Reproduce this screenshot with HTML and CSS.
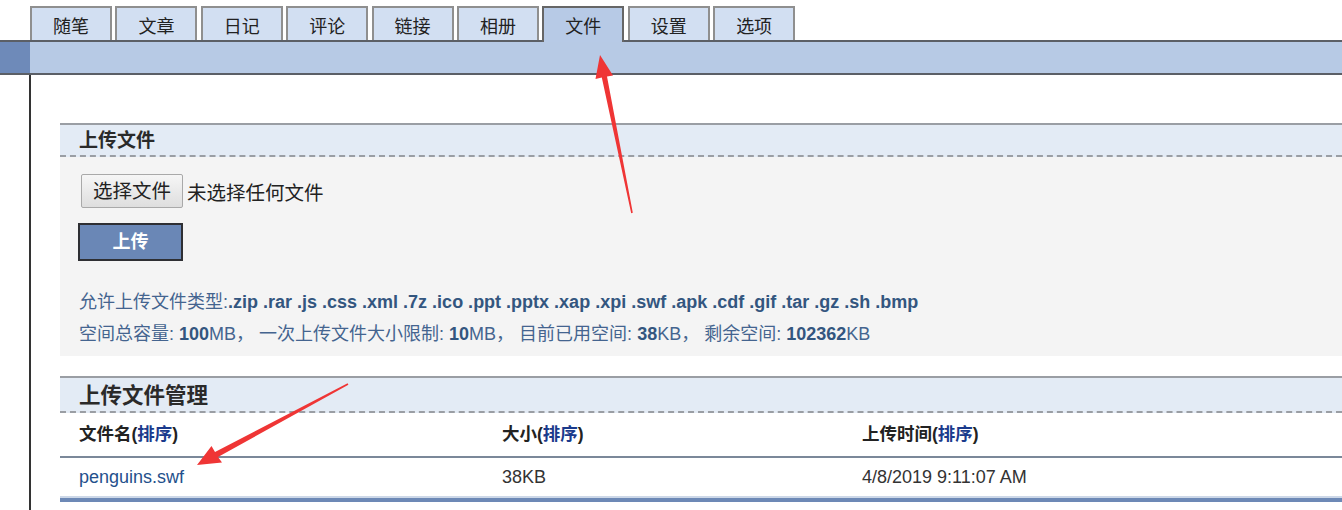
FILE: index.html
```html
<!DOCTYPE html>
<html lang="zh-CN">
<head>
	<meta charset="UTF-8">
	<title>文件</title>
	<link rel="stylesheet" href="styles.css">
</head>
<body>
	<!--Top tabs-->
	<div class="tabs">
		<div class="tab">随笔</div>
		<div class="tab">文章</div>
		<div class="tab">日记</div>
		<div class="tab">评论</div>
		<div class="tab">链接</div>
		<div class="tab">相册</div>
		<div class="tab active">文件</div>
		<div class="tab">设置</div>
		<div class="tab">选项</div>
	</div>
	<div class="bar">
		<div class="bar-left"></div>
		<div class="bar-main"></div>
	</div>

	<div class="main">
		<!--Upload section-->
		<div class="panel">
			<div class="panel-head">上传文件</div>
			<div class="panel-body">
				<div class="file-row">
					<span class="file-btn">选择文件</span>
					<span class="file-name">未选择任何文件</span>
				</div>
				<div class="upload-btn">上传</div>
				<p class="info">允许上传文件类型:<b>.zip .rar .js .css .xml .7z .ico .ppt .pptx .xap .xpi .swf .apk .cdf .gif .tar .gz .sh .bmp</b></p>
				<p class="info">空间总容量: <b>100</b>MB， 一次上传文件大小限制: <b>10</b>MB， 目前已用空间: <b>38</b>KB， 剩余空间: <b>102362</b>KB</p>
			</div>
		</div>

		<!--File list section-->
		<div class="panel list">
			<div class="panel-head big">上传文件管理</div>
			<div class="grid head-row">
				<div>文件名(<a href="#">排序</a>)</div>
				<div>大小(<a href="#">排序</a>)</div>
				<div>上传时间(<a href="#">排序</a>)</div>
			</div>
			<div class="grid data-row">
				<div><a href="#">penguins.swf</a></div>
				<div>38KB</div>
				<div>4/8/2019 9:11:07 AM</div>
			</div>
		</div>
	</div>

	<!--Annotation arrows-->
	<svg class="arrows" width="1342" height="510" viewBox="0 0 1342 510">
		<polygon fill="#ef3535" points="600,55 613,75.5 607,76.5 632.8,212.8 631.2,213.2 601.8,77.5 595.5,79"/>
		<polygon fill="#ef3535" points="197,465 222,462.5 218,457 348.4,384.7 347.6,383.3 215,452 211.5,446"/>
	</svg>
</body>
</html>
```

FILE: styles.css
```css
* {
	box-sizing: border-box;
}

body {
	margin: 0;
	width: 1342px;
	height: 510px;
	overflow: hidden;
	position: relative;
	font-family: "Liberation Sans", "Noto Sans CJK SC", sans-serif;
	color: #222;
	background: #fff;
}

/* Tabs across the top */
.tabs {
	display: flex;
	gap: 3.4px;
	padding: 6px 0 0 30px;
	height: 40px;
}

.tab {
	width: 82px;
	height: 34px;
	border: 2px solid #8f8f8f;
	border-bottom: none;
	background: #d2dff2;
	font-size: 18px;
	line-height: 28px;
	padding-top: 5px;
	text-align: center;
	color: #222;
}

.tab.active {
	height: 36px;
	margin-bottom: -2px;
	position: relative;
	z-index: 1;
	border-color: #666;
	background: #b7cae6;
}

.bar {
	display: grid;
	grid-template-columns: 30px 1fr;
	height: 35px;
	border-top: 2px solid #5b5f66;
	border-bottom: 2px solid #5b5f66;
}

.bar-left { background: #6e8ab9; }
.bar-main { background: #b7cae5; }

/* Content area */
.main {
	margin-left: 29px;
	border-left: 2px solid #333;
	padding: 48px 0 0 29px;
	height: 435px;
}

.panel {
	border-top: 2px solid #9a9ea4;
}

.panel-head {
	height: 32px;
	background: #e3ebf5;
	border-bottom: 2px dashed #9a9ea4;
	padding-left: 19px;
	font-size: 19px;
	font-weight: bold;
	line-height: 31px;
	color: #2a2a2a;
}

.panel-head.big {
	font-size: 21.5px;
	height: 35px;
	padding-top: 2px;
	line-height: 33px;
}

.panel-body {
	background: #f4f4f4;
	padding: 17px 0 4px 18px;
	height: 199px;
}

.file-row {
	display: flex;
	align-items: center;
	gap: 4px;
	padding-left: 3px;
}

.file-btn {
	width: 102px;
	height: 34px;
	border: 1px solid #a9a9a9;
	border-radius: 2px;
	background: linear-gradient(#f6f6f6, #dedede);
	font-size: 19.5px;
	line-height: 32px;
	text-align: center;
	color: #222;
}

.file-name {
	font-size: 19.5px;
	color: #222;
}

.upload-btn {
	width: 105px;
	height: 38px;
	margin-top: 15px;
	border: 2px solid #2e2f33;
	background: #6a87b6;
	color: #fff;
	font-size: 18px;
	font-weight: bold;
	line-height: 35px;
	text-align: center;
}

.info {
	margin: 0;
	font-size: 18px;
	line-height: 32px;
	color: #44648f;
	padding-left: 1px;
}

.info:first-of-type {
	margin-top: 25px;
}

.info b {
	color: #33567f;
}

/* File list table */
.list {
	margin-top: 20px;
	border-bottom: 4px solid #6d89b6;
}

.grid {
	display: grid;
	grid-template-columns: 423px 360px 1fr;
	padding-left: 19px;
}

.head-row {
	height: 45px;
	line-height: 43px;
	font-size: 17.5px;
	font-weight: bold;
	border-bottom: 2px solid #7b8899;
}

.head-row a {
	color: #1a3a8c;
	text-decoration: none;
}

.data-row {
	height: 40px;
	line-height: 38px;
	font-size: 18px;
	color: #333;
	border-bottom: 2px solid #cdd8e8;
}

.data-row a {
	color: #24508c;
	text-decoration: none;
}

/* Red annotation arrows over the page */
.arrows {
	position: absolute;
	left: 0;
	top: 0;
	pointer-events: none;
	z-index: 5;
}
```
